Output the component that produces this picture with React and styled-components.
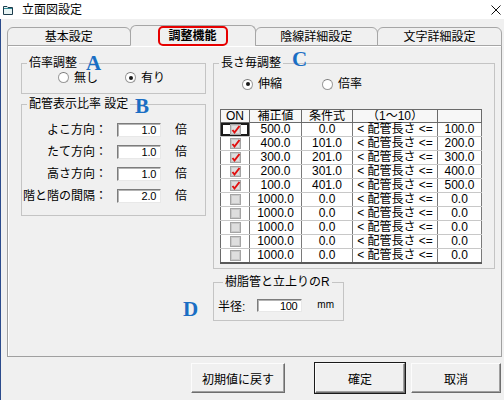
import React from 'react';
import styled, { createGlobalStyle } from 'styled-components';

const Global = createGlobalStyle`
  html, body { margin: 0; padding: 0; background: #f0f0f0; }
  body {
    font-family: "Liberation Sans", "Noto Sans CJK JP", sans-serif;
    font-size: 12px;
    color: #000;
  }
  * { box-sizing: border-box; }
`;

const Window = styled.div`
  width: 504px;
  height: 400px;
  display: flex;
  flex-direction: column;
  background: #f0f0f0;
  overflow: hidden;
`;

const TitleBar = styled.div`
  height: 19px;
  flex: none;
  background: #fff;
  display: flex;
  align-items: center;
  padding: 0 3px 0 3px;
`;

const Title = styled.span`
  flex: 1;
  margin-left: 9px;
  font-size: 12px;
  line-height: 14px;
`;

const Body = styled.div`
  flex: 1;
  display: flex;
  flex-direction: column;
  border-left: 1px solid #2b4b8c;
  padding: 0 2px 0 6px;
`;

const TabStrip = styled.div`
  height: 27px;
  display: flex;
  align-items: flex-end;
  margin-bottom: -1px;
  position: relative;
  z-index: 1;
`;

const Tab = styled.div`
  width: ${p => p.$w}px;
  height: ${p => (p.$active ? 21 : 19)}px;
  display: flex;
  align-items: center;
  justify-content: center;
  background: #f0f0f0;
  border: 1px solid #a6a6a6;
  border-bottom: ${p => (p.$active ? '1px solid #f0f0f0' : '1px solid #a6a6a6')};
  border-radius: 6px 6px 0 0;
  font-weight: ${p => (p.$active ? 'bold' : 'normal')};
  line-height: 14px;
  margin-left: ${p => (p.$first ? 0 : -1)}px;
`;

const Highlight = styled.span`
  border: 2px solid #e60000;
  border-radius: 5px;
  padding: 1px 9px;
  line-height: 14px;
`;

const Panel = styled.div`
  position: relative;
  height: 312px;
  border: 1px solid #a0a0a0;
  box-shadow: inset 1px 1px 0 #fff;
  background: #f0f0f0;
  display: grid;
  grid-template-columns: 185px 282px;
  column-gap: 7px;
  align-content: start;
  padding: 10px 0 0 13px;
`;

const Column = styled.div`
  display: flex;
  flex-direction: column;
  align-items: flex-start;
`;

const Group = styled.fieldset`
  margin: ${p => p.$mt || 0}px 0 0 0;
  padding: ${p => p.$pad || '0'};
  border: 1px solid #c4c4c4;
  width: ${p => p.$w}px;
  min-width: 0;
`;

const Legend = styled.legend`
  position: relative;
  margin-left: 5px;
  padding: 0 2px;
  font-size: 12px;
  line-height: 14px;
`;

const Mark = styled.span`
  position: absolute;
  left: ${p => p.$x}px;
  top: ${p => p.$y}px;
  font-family: "Liberation Serif", "DejaVu Serif", serif;
  font-weight: bold;
  font-size: 21px;
  line-height: 14px;
  color: #1a6ec4;
  pointer-events: none;
`;

const RadioRow = styled.div`
  display: flex;
  align-items: center;
  height: ${p => p.$h || 15}px;
  padding-left: ${p => p.$pl || 0}px;
`;

const RadioItem = styled.label`
  display: flex;
  align-items: center;
  width: ${p => p.$w}px;
  line-height: 14px;
`;

const RadioDot = styled.span`
  width: 11px;
  height: 11px;
  border-radius: 50%;
  background: #fff;
  border: 1px solid #9a9a9a;
  border-top-color: #7a7a7a;
  margin-right: 5px;
  display: flex;
  align-items: center;
  justify-content: center;
  &::after {
    content: '';
    width: 4px;
    height: 4px;
    border-radius: 50%;
    background: ${p => (p.$on ? '#1a1a1a' : 'transparent')};
  }
`;

const ScaleList = styled.div`
  display: flex;
  flex-direction: column;
  padding: 8px 0 8px 0;
`;

const ScaleRow = styled.div`
  display: flex;
  align-items: center;
  height: 22px;
`;

const FieldLabel = styled.span`
  width: ${p => p.$w}px;
  text-align: right;
  line-height: 14px;
  flex: none;
`;

const NumBox = styled.div`
  width: ${p => p.$w}px;
  height: ${p => p.$h || 14}px;
  margin-left: ${p => p.$ml}px;
  background: #fff;
  border: 1px solid;
  border-color: #7c7c7c #e8e8e8 #e8e8e8 #7c7c7c;
  box-shadow: inset 1px 1px 0 #b4b4b4;
  text-align: right;
  padding-right: 4px;
  font-size: 11px;
  line-height: 12px;
  flex: none;
  letter-spacing: -0.3px;
`;

const Unit = styled.span`
  margin-left: ${p => p.$ml}px;
  line-height: 14px;
  font-size: ${p => p.$fs || 12}px;
`;

const Table = styled.table`
  border-collapse: collapse;
  table-layout: fixed;
  width: 261px;
  margin: 18px 0 4px 6px;
  background: #fff;
  border-top: 1px solid #6a6a6a;
  border-left: 1px solid #6a6a6a;
  border-right: 1px solid #9a9a9a;
  border-bottom: 2px solid #5a5a5a;
`;

const Th = styled.th`
  height: 12px;
  padding: 0;
  font-weight: normal;
  font-size: 12px;
  line-height: 12px;
  background: #f7f7f7;
  border-right: 1px solid #6a6a6a;
  border-bottom: 1px solid #6a6a6a;
  text-align: center;
  overflow: hidden;
  white-space: nowrap;
`;

const Td = styled.td`
  height: 13.6px;
  padding: 0;
  text-align: center;
  font-size: 12px;
  line-height: 13px;
  border-right: 1px solid #7a7a7a;
  border-bottom: 1px solid #c8c8c8;
  white-space: nowrap;
  box-shadow: ${p => (p.$focus ? 'inset 0 0 0 2px #1a1a1a' : 'none')};
  vertical-align: middle;
`;

const CheckWrap = styled.span`
  display: inline-flex;
  vertical-align: middle;
`;

const ButtonRow = styled.div`
  display: flex;
  justify-content: flex-end;
  margin-top: 6px;
  padding-right: 1px;
  gap: 6px;
`;

const Button = styled.button`
  width: ${p => p.$w}px;
  height: 30px;
  margin-right: ${p => p.$mr || 0}px;
  font-family: inherit;
  font-size: 12px;
  color: #000;
  background: #f0f0f0;
  border: 1px solid;
  border-color: #fcfcfc #6e6e6e #6e6e6e #fcfcfc;
  box-shadow: ${p => (p.$default ? '0 0 0 1px #1a1a1a, inset -1px -1px 0 #a0a0a0' : 'inset -1px -1px 0 #a0a0a0')};
  padding: 0;
`;

const TitleIcon = () => (
  <svg width="10" height="10" viewBox="0 0 10 10">
    <path d="M0.5 1.5 H4 L5 2.5 H9.5 V9.5 H0.5 Z" fill="#e8f4f4" stroke="#1d3c4c" strokeWidth="1" />
    <path d="M1 3 H9 V4 H1 Z" fill="#2f8a96" />
  </svg>
);

const CloseIcon = () => (
  <svg width="10" height="10" viewBox="0 0 10 10">
    <path d="M0.5 0.5 L9.5 9.5 M9.5 0.5 L0.5 9.5" stroke="#111" strokeWidth="1" />
  </svg>
);

const CheckBox = ({ on }) => (
  <svg width="11" height="11" viewBox="0 0 11 11">
    <rect x="0.5" y="0.5" width="10" height="10" fill="#c9c9c9" stroke="#a4a4a4" />
    <rect x="2" y="2" width="7" height="7" fill="#dedede" />
    {on && <path d="M2.5 6 L4.5 8.5 L9.5 2" stroke="#e01010" strokeWidth="2" fill="none" />}
  </svg>
);

const rows = [
  { on: true, v: '500.0', a: '0.0', b: '100.0' },
  { on: true, v: '400.0', a: '101.0', b: '200.0' },
  { on: true, v: '300.0', a: '201.0', b: '300.0' },
  { on: true, v: '200.0', a: '301.0', b: '400.0' },
  { on: true, v: '100.0', a: '401.0', b: '500.0' },
  { on: false, v: '1000.0', a: '0.0', b: '0.0' },
  { on: false, v: '1000.0', a: '0.0', b: '0.0' },
  { on: false, v: '1000.0', a: '0.0', b: '0.0' },
  { on: false, v: '1000.0', a: '0.0', b: '0.0' },
  { on: false, v: '1000.0', a: '0.0', b: '0.0' },
];

const scales = [
  { label: 'よこ方向：', value: '1.0' },
  { label: 'たて方向：', value: '1.0' },
  { label: '高さ方向：', value: '1.0' },
  { label: '階と階の間隔：', value: '2.0' },
];

export default function App() {
  return (
    <Window>
      <Global />
      <TitleBar>
        <TitleIcon />
        <Title>立面図設定</Title>
        <CloseIcon />
      </TitleBar>
      <Body>
        <TabStrip>
          <Tab $w={124} $first>基本設定</Tab>
          <Tab $w={126} $active><Highlight>調整機能</Highlight></Tab>
          <Tab $w={124}>陰線詳細設定</Tab>
          <Tab $w={125}>文字詳細設定</Tab>
        </TabStrip>
        <Panel>
          <Column>
            <Group $w={185} $pad="0 0 8px 0">
              <Legend>倍率調整<Mark $x={59} $y={0}>A</Mark></Legend>
              <RadioRow $pl={36}>
                <RadioItem $w={67}><RadioDot />無し</RadioItem>
                <RadioItem $w={60}><RadioDot $on />有り</RadioItem>
              </RadioRow>
            </Group>
            <Group $w={185} $mt={3}>
              <Legend>配管表示比率 設定<Mark $x={108} $y={2}>B</Mark></Legend>
              <ScaleList>
                {scales.map(s => (
                  <ScaleRow key={s.label}>
                    <FieldLabel $w={85}>{s.label}</FieldLabel>
                    <NumBox $w={44} $ml={10}>{s.value}</NumBox>
                    <Unit $ml={14}>倍</Unit>
                  </ScaleRow>
                ))}
              </ScaleList>
            </Group>
          </Column>
          <Column>
            <Group $w={282} $pad="7px 0 0 0">
              <Legend>長さ毎調整<Mark $x={73} $y={-4}>C</Mark></Legend>
              <RadioRow $pl={28} $h={14}>
                <RadioItem $w={80}><RadioDot $on />伸縮</RadioItem>
                <RadioItem $w={60}><RadioDot />倍率</RadioItem>
              </RadioRow>
              <Table>
                <colgroup>
                  <col style={{ width: 29 }} />
                  <col style={{ width: 52 }} />
                  <col style={{ width: 51 }} />
                  <col style={{ width: 85 }} />
                  <col style={{ width: 44 }} />
                </colgroup>
                <thead>
                  <tr>
                    <Th>ON</Th>
                    <Th>補正値</Th>
                    <Th>条件式</Th>
                    <Th>（1〜10）</Th>
                    <Th></Th>
                  </tr>
                </thead>
                <tbody>
                  {rows.map((r, i) => (
                    <tr key={i}>
                      <Td $focus={i === 0}><CheckWrap><CheckBox on={r.on} /></CheckWrap></Td>
                      <Td>{r.v}</Td>
                      <Td>{r.a}</Td>
                      <Td>&lt; 配管長さ &lt;=</Td>
                      <Td>{r.b}</Td>
                    </tr>
                  ))}
                </tbody>
              </Table>
            </Group>
            <Group $w={131} $mt={6} $pad="9px 0 8px 4px">
              <Legend>樹脂管と立上りのR</Legend>
              <RadioRow $h={14}>
                <span>半径:</span>
                <NumBox $w={45} $h={13} $ml={12}>100</NumBox>
                <Unit $ml={15} $fs={10}>mm</Unit>
              </RadioRow>
            </Group>
          </Column>
          <Mark $x={175} $y={256}>D</Mark>
        </Panel>
        <ButtonRow>
          <Button $w={94} $mr={24}>初期値に戻す</Button>
          <Button $w={90} $default>確定</Button>
          <Button $w={90}>取消</Button>
        </ButtonRow>
      </Body>
    </Window>
  );
}
